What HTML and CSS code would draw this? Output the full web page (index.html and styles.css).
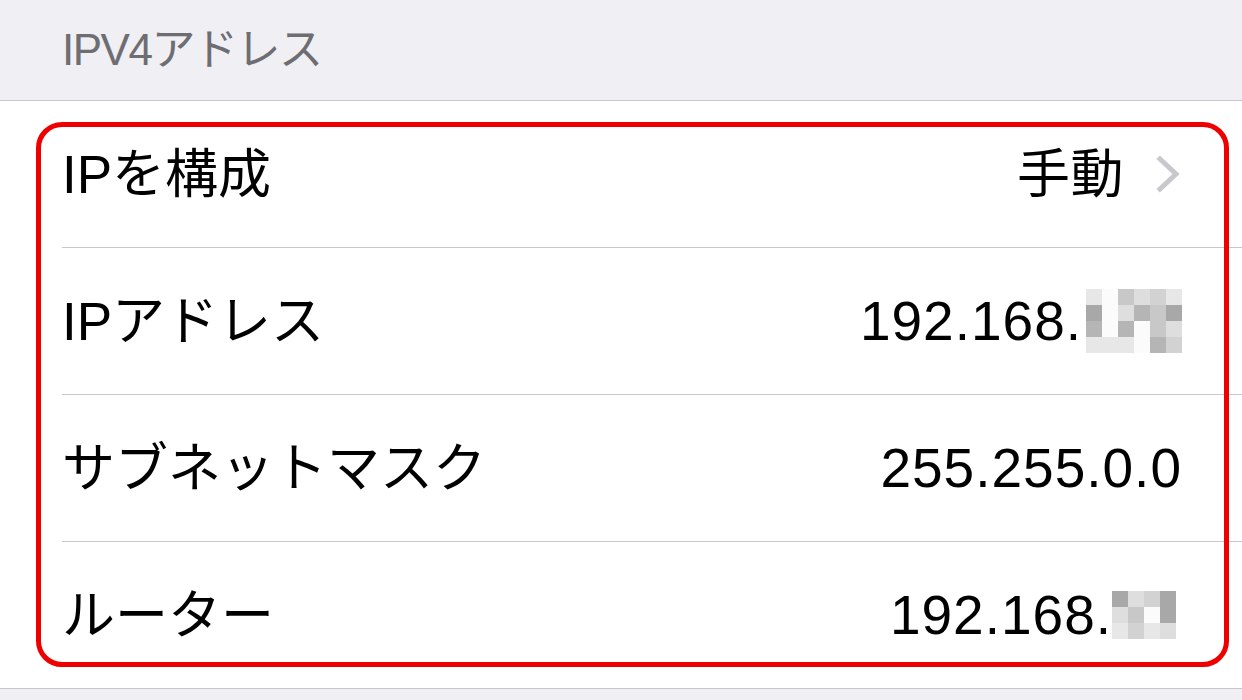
FILE: index.html
```html
<!DOCTYPE html>
<html lang="ja">
<head>
<meta charset="utf-8">
<link rel="stylesheet" href="styles.css">
</head>
<body>
<div class="page">
  <div class="section-header">IPV4アドレス</div>
  <div class="list">
    <div class="row"><div class="row-inner">
      <span class="label">IPを構成</span>
      <span class="value">手動<svg class="chevron" width="26" height="40" viewBox="0 0 26 40"><path d="M4 5 L20 20 L4 35" fill="none" stroke="#c7c7cc" stroke-width="5" stroke-linecap="square" stroke-linejoin="miter"/></svg></span>
    </div></div>
    <div class="row"><div class="row-inner">
      <span class="label">IPアドレス</span>
      <span class="value num">192.168.<span class="mosaic m6">
        <i class="c1"></i><i class="c0"></i><i class="c4"></i><i class="c2"></i><i class="c3"></i><i class="c1"></i>
        <i class="c6"></i><i class="c0"></i><i class="c2"></i><i class="c5"></i><i class="c4"></i><i class="c6"></i>
        <i class="c5"></i><i class="c0"></i><i class="c5"></i><i class="c0"></i><i class="c4"></i><i class="c2"></i>
        <i class="c1"></i><i class="c1"></i><i class="c1"></i><i class="c0"></i><i class="c5"></i><i class="c3"></i>
      </span></span>
    </div></div>
    <div class="row"><div class="row-inner">
      <span class="label">サブネットマスク</span>
      <span class="value num">255.255.0.0</span>
    </div></div>
    <div class="row last"><div class="row-inner">
      <span class="label">ルーター</span>
      <span class="value num">192.168.<span class="mosaic m4">
        <i class="c6"></i><i class="c2"></i><i class="c3"></i><i class="c6"></i>
        <i class="c2"></i><i class="c4"></i><i class="c0"></i><i class="c6"></i>
        <i class="c1"></i><i class="c3"></i><i class="c1"></i><i class="c2"></i>
      </span></span>
    </div></div>
  </div>
  <div class="highlight"></div>
</div>
</body>
</html>
```
FILE: styles.css
```css
* { box-sizing: border-box; }
html, body { margin: 0; padding: 0; }
body {
  background: #efeff4;
  font-family: "Liberation Sans", "Noto Sans CJK JP", sans-serif;
  width: 1242px;
  height: 700px;
  overflow: hidden;
}
.page { position: relative; width: 1242px; height: 700px; }
.section-header {
  height: 101px;
  border-bottom: 1px solid #c8c7cc;
  padding: 24px 0 0 62px;
  font-size: 44px;
  line-height: 52px;
  letter-spacing: -1.5px;
  color: #6d6d72;
}
.list {
  background: #ffffff;
  border-bottom: 1px solid #c8c7cc;
}
.row { padding-left: 62px; }
.row-inner {
  height: 147px;
  border-bottom: 1px solid #c8c7cc;
  display: flex;
  align-items: center;
  justify-content: space-between;
  padding-right: 60px;
  font-size: 53px;
  color: #000;
}
.row.last .row-inner { height: 146px; border-bottom: none; }
.label { line-height: 1; }
.value { display: flex; align-items: center; line-height: 1; letter-spacing: 0.5px; }
.value.num { font-size: 55px; letter-spacing: 1px; }
.chevron { margin-left: 32px; }
.mosaic { display: grid; grid-auto-rows: 16px; margin-left: 4px; }
.mosaic.m6 { grid-template-columns: repeat(6, 16px); }
.mosaic.m4 { grid-template-columns: repeat(4, 16px); margin-left: 0; margin-right: 6px; }
.mosaic i { display: block; }
.c0 { background: #fbfbfb; }
.c1 { background: #e7e7e7; }
.c2 { background: #dedede; }
.c3 { background: #d2d2d2; }
.c4 { background: #c8c8c8; }
.c5 { background: #b5b5b5; }
.c6 { background: #a8a8a8; }
.highlight {
  position: absolute;
  left: 36px;
  top: 122px;
  width: 1193px;
  height: 545px;
  border: 5px solid #ee0000;
  border-radius: 26px;
  pointer-events: none;
}
```
